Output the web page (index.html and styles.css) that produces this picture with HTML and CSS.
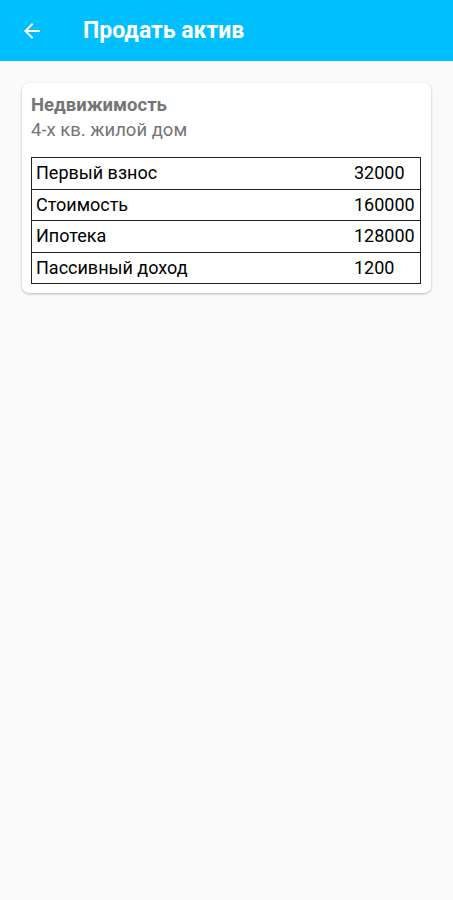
FILE: index.html
```html
<!DOCTYPE html>
<html lang="ru">
<head>
    <meta charset="UTF-8">
    <meta name="viewport" content="width=device-width, initial-scale=1.0">
    <title>Продать актив</title>
    <link rel="stylesheet" href="styles.css">
</head>
<body>
    <header class="toolbar">
        <button class="back-btn" aria-label="Назад">
            <svg viewBox="0 0 24 24" width="24" height="24">
                <path d="M20 11H7.83l5.59-5.59L12 4l-8 8 8 8 1.41-1.41L7.83 13H20v-2z" fill="#fff"/>
            </svg>
        </button>
        <h1 class="toolbar-title">Продать актив</h1>
    </header>

    <main class="content">
        <div class="card">
            <div class="card-title">Недвижимость</div>
            <div class="card-subtitle">4-х кв. жилой дом</div>

            <div class="asset-table">
                <div class="row">
                    <span class="label">Первый взнос</span>
                    <span class="value">32000</span>
                </div>
                <div class="row">
                    <span class="label">Стоимость</span>
                    <span class="value">160000</span>
                </div>
                <div class="row">
                    <span class="label">Ипотека</span>
                    <span class="value">128000</span>
                </div>
                <div class="row">
                    <span class="label">Пассивный доход</span>
                    <span class="value">1200</span>
                </div>
            </div>
        </div>
    </main>
</body>
</html>
```

FILE: styles.css
```css
body {
    margin: 0;
    font-family: Roboto, "Noto Sans", sans-serif;
    background-color: #fafafa;
    min-height: 900px;
}
.toolbar {
    height: 61px;
    background-color: #00bfff;
    display: flex;
    align-items: center;
}
.back-btn {
    width: 24px;
    height: 24px;
    margin-left: 20px;
    padding: 0;
    border: none;
    background: none;
    display: flex;
}
.toolbar-title {
    margin: 0 0 0 39px;
    color: #ffffff;
    font-size: 23px;
    font-weight: bold;
}
.content {
    padding: 22px 22px 0 22px;
}
.card {
    background-color: #ffffff;
    border-radius: 7px;
    box-shadow: 0 1px 3px rgba(0, 0, 0, 0.2), 0 1px 2px rgba(0, 0, 0, 0.08);
    padding: 11px 10px 9px 9px;
}
.card-title {
    color: #757575;
    font-size: 18.5px;
    font-weight: bold;
    line-height: 23px;
}
.card-subtitle {
    color: #757575;
    font-size: 18.5px;
    line-height: 26px;
    margin-bottom: 14px;
}
.asset-table {
    border: 1px solid #222;
    border-bottom: none;
}
.row {
    display: grid;
    grid-template-columns: 1fr 66px;
    border-bottom: 1px solid #222;
    line-height: 30.5px;
    font-size: 18px;
    color: #000;
}
.label {
    padding-left: 4px;
}
```
